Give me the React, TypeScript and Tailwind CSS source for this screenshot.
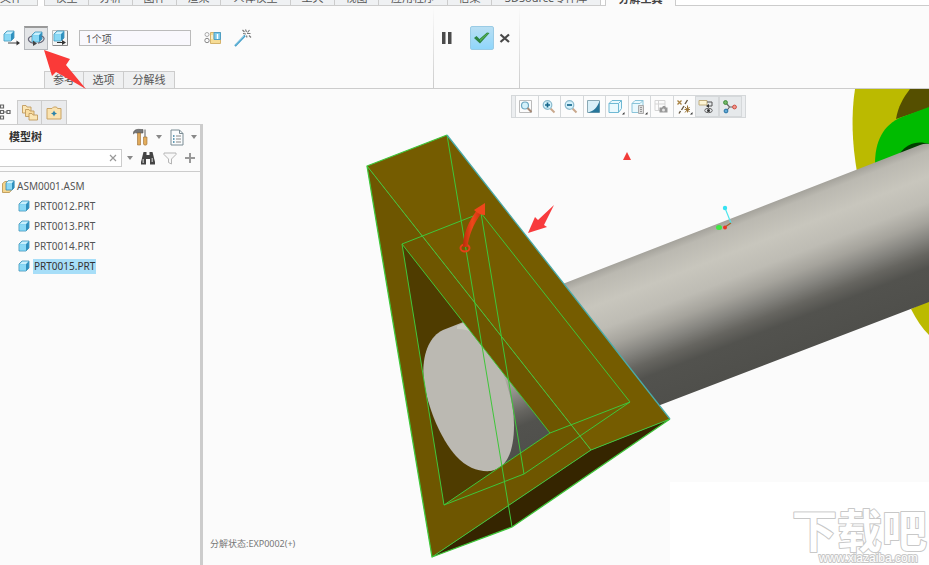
import React from "react";
import clsx from "clsx";

const tabs = [
  { name: "模型", width: "w-11" },
  { name: "分析", width: "w-11" },
  { name: "图样", width: "w-11" },
  { name: "渲染", width: "w-11" },
  { name: "人体模型", width: "w-[70px]" },
  { name: "工具", width: "w-11" },
  { name: "视图", width: "w-11" },
  { name: "应用程序", width: "w-[69px]" },
  { name: "信集", width: "w-11" },
  { name: "3DSource零件库", width: "w-[109px]" },
];

const parts = ["PRT0012.PRT", "PRT0013.PRT", "PRT0014.PRT", "PRT0015.PRT"];

/* ---------- icons ---------- */

const Cube = () => (
  <g strokeLinejoin="round">
    <path d="M1 4 4 1h7v7l-3 3H1z" fill="#4fb4dc" stroke="#3d8fb4" strokeWidth="0.8" />
    <path d="M1.5 4.2 4.2 1.5h6.4L8 4.2z" fill="#c9f0fd" />
    <path d="M1.4 4.2H8v6.4H1.4z" fill="#8ad8f5" />
    <path d="M8 4.2 10.7 1.5v6.4L8 10.6z" fill="#2f8fbd" />
  </g>
);

const PartIcon = () => (
  <svg viewBox="0 0 12 12" className="h-3 w-3 shrink-0">
    <Cube />
  </svg>
);

const AsmIcon = () => (
  <svg viewBox="0 0 13 13" className="h-[13px] w-[13px] shrink-0">
    <path d="M.5 3.5 3 1.5h7v8l-2.500 3h-7z" fill="#f5d58d" stroke="#b58f47" strokeWidth="0.8" />
    <path d="M4 3 6 .8h6.200v7L10 10H4z" fill="#8ad8f5" stroke="#3487ae" strokeWidth="0.8" />
    <path d="M10 3 12 1v7l-2 2z" fill="#2f8fbd" />
    <path d="M4.500 3 6.300 1.200h5L9.800 3z" fill="#d5f4fd" />
  </svg>
);

const TranslateIcon = () => (
  <svg viewBox="0 0 18 18" className="h-[18px] w-[18px]">
    <g transform="translate(0 1)">
      <Cube />
    </g>
    <path d="M5 14h9" stroke="#444" strokeWidth="1" />
    <path d="M13.500 11.500 17 14 13.500 16.500z" fill="#333" />
  </svg>
);

const RotateIcon = () => (
  <svg viewBox="0 0 18 18" className="h-[18px] w-[18px]" fill="none">
    <g transform="translate(4 1)">
      <Cube />
    </g>
    <path
      d="M5 6C1.500 7 .8 9 2 10.800c1 1.500 3 2.200 5 2.500M14.500 6c3 .8 3.200 3 1.500 4.800-1 1.300-3 2-5 2.400"
      stroke="#667"
      strokeWidth="1.200"
    />
    <path d="M6 10.500 10 13.500 6 16z" fill="#444" />
  </svg>
);

const ViewPlaneIcon = () => (
  <svg viewBox="0 0 16 16" className="h-4 w-4">
    <path d="M.5.5h15v15H.5z" fill="#f5f5f5" stroke="#bbb" />
    <path d="M15.500 1v14.500H1" fill="none" stroke="#888" />
    <g transform="translate(1 0)">
      <Cube />
    </g>
    <path d="M5 12.500h6" stroke="#333" />
    <path d="M10 10 14 12.500 10 15z" fill="#333" />
  </svg>
);

const CopyMotionIcon = () => (
  <svg viewBox="0 0 18 14" className="h-[14px] w-[18px]" fill="none">
    <circle cx="3" cy="3.500" r="2" stroke="#aaa" />
    <circle cx="3" cy="9.500" r="2.200" stroke="#888" />
    <path d="M6.500 1.500h10v11h-10z" fill="#f6dc95" stroke="#d4b36c" />
    <path d="M10 1.500h6.500v7H10z" fill="#7cc9ea" stroke="#4f9fc4" />
    <path d="M13.500 3v5" stroke="#fff" strokeWidth="1.500" />
    <path d="M8 4v4" stroke="#fff" />
  </svg>
);

const WandIcon = () => (
  <svg viewBox="0 0 18 18" className="h-[18px] w-[18px]" fill="none">
    <path d="M1 17 11 6.500" stroke="#3f9bc6" strokeWidth="2" />
    <path d="M1 16.500 10 7" stroke="#a9e1f6" strokeWidth="0.7" />
    <path
      d="m8.500 1 2 2M11.500.5l1 2.500M15.500 1l-2 2.500M9 4.500l3 .5M13 4.500h3.500M12.500 6.500l.5 2M15 6.500l2 2"
      stroke="#777"
      strokeWidth="1.100"
    />
  </svg>
);

const FoldersIcon = () => (
  <svg viewBox="0 0 18 17" className="h-[17px] w-[18px]" stroke="#c19a5c" strokeWidth="0.9" strokeLinejoin="round">
    <path d="M1.500 1.500h3.500l1 1.500h4v6h-8.500z" fill="#fbe6b5" />
    <path d="M4.500 5.500H8L9 7h4v5.500H4.500z" fill="#f9dda0" />
    <path d="M8 9.500h3l1 1.500h4.500v5H8z" fill="#fbe6b5" />
  </svg>
);

const FavoritesIcon = () => (
  <svg viewBox="0 0 16 14" className="h-[14px] w-4">
    <path d="M1 2.500h5L7.500 1h3l1 1.500H15v10.500H1z" fill="#fae3b0" stroke="#c9a364" />
    <path d="m8 4.500 1 2 2 1-2 1-1 2-1-2-2-1 2-1z" fill="#2b83ab" />
  </svg>
);

const TreeTabIcon = () => (
  <svg viewBox="0 0 12 18" className="h-[18px] w-3" fill="none" stroke="#666" strokeWidth="1.200">
    <path d="M.5 2h3v3h-3zM.5 7.500h3v3h-3zM.5 13h3v3h-3zM7 7.500h3v3H7zM3.500 9H7" />
  </svg>
);

const ToolsIcon = () => (
  <svg viewBox="0 0 15 18" className="h-[18px] w-[15px]">
    <path d="M.5 4C2 1.500 4 1 8 1.500h2v3.500H3.500C2 4.500 1.500 5 .5 6z" fill="#777" stroke="#555" strokeWidth="0.6" />
    <path d="M4.500 5h3v12h-3z" fill="#dfa95b" stroke="#9a6c30" strokeWidth="0.6" />
    <path d="M12 1.500V9" stroke="#888" strokeWidth="1.400" />
    <path d="M10.500 9H14v7c0 1.500-3.500 1.500-3.500 0z" fill="#e3ae5e" stroke="#9a6c30" strokeWidth="0.6" />
  </svg>
);

const SettingsListIcon = () => (
  <svg viewBox="0 0 14 17" className="h-[17px] w-[14px]" fill="none">
    <path d="M1 1h8.500L13 4.500V16H1z" fill="#fafcfd" stroke="#7b8c94" />
    <path d="M9.500 1v3.500H13" stroke="#7b8c94" />
    <path d="M3 7h1.500M3 10h1.500M3 13h1.500" stroke="#347d9f" strokeWidth="1.500" />
    <path d="M6 7h5M6 10h5M6 13h5" stroke="#888" />
  </svg>
);

const BinocularsIcon = () => (
  <svg viewBox="0 0 16 14" className="h-[14px] w-4" fill="#444">
    <path d="M3.500 1h3v3h3V1h3l1 4 1.500 6v2.500h-5V8H6v5.500H1V11l1.500-6z" />
    <path d="M2.500 8H4v4H2.500zM11.500 7H13v4h-1.500z" fill="#aaa" />
  </svg>
);

const FilterIcon = () => (
  <svg viewBox="0 0 14 13" className="h-[13px] w-[14px]">
    <path d="M1 1h12v1.500L8.500 7v5l-3-1.500V7L1 2.500z" fill="#f8f8f8" stroke="#b5b5b5" />
  </svg>
);

const Caret = () => (
  <svg viewBox="0 0 6 4" className="h-1 w-[6px]">
    <path d="M0 0h6L3 4z" fill="#888" />
  </svg>
);

const Glass = ({ children }: { children?: React.ReactNode }) => (
  <>
    <path d="m9.500 9.500 4 4" stroke="#c9a88c" strokeWidth="2" />
    <circle cx="6.500" cy="6" r="4.300" fill="#d3f1fb" stroke="#8bbacd" strokeWidth="1.200" />
    {children}
  </>
);

const viewTools = [
  {
    label: "重新调整",
    icon: (
      <>
        <path d="M1.500 1.500h12v12h-12z" stroke="#bbb" />
        <circle cx="7" cy="6.500" r="3.500" fill="#d3f1fb" stroke="#6da7c0" strokeWidth="1.200" />
        <path d="m9.500 9 4 4" stroke="#a78975" strokeWidth="2" />
      </>
    ),
  },
  { label: "放大", icon: <Glass><path d="M4 6h5M6.500 3.500v5" stroke="#17678c" strokeWidth="1.700" /></Glass> },
  { label: "缩小", icon: <Glass><path d="M4 6h5" stroke="#17678c" strokeWidth="1.700" /></Glass> },
  {
    label: "重画",
    icon: (
      <>
        <path d="M1.500 1.500h12v12h-12z" fill="#d9f0f9" stroke="#8aa9b5" />
        <path d="M13.500 2v11.500H2C8 12 11 9 13.500 2z" fill="#27769a" />
      </>
    ),
  },
  {
    label: "显示样式",
    icon: (
      <>
        <path d="M1 4.500 4 1.500h9.500v8l-3 4H1z" fill="#e9f9fe" stroke="#6fb9d4" />
        <path d="M1 4.500h9.500v9M10.500 4.500l3-3" stroke="#6fb9d4" />
        <path d="M14 15.500h2.500V13z" fill="#333" />
      </>
    ),
  },
  {
    label: "已保存方向",
    icon: (
      <>
        <path d="M1 4.500 4 1.500h8v9l-3 3H1z" fill="#e9f9fe" stroke="#8ac4d9" />
        <path d="M1 4.500h8M9 4.500l3-3" stroke="#8ac4d9" />
        <path d="M7.500 6.500h5v8h-5z" fill="#ddd" stroke="#aaa" />
        <path d="M9 8.500h2M9 10.500h2M9 12.500h2" stroke="#999" />
        <path d="M14 15.500h2.500V13z" fill="#333" />
      </>
    ),
  },
  {
    label: "视图管理器",
    icon: (
      <>
        <path d="M2 1.500h10v10H2zM2 5h10M5.500 1.500v10" stroke="#d5d5d5" />
        <path d="M6.500 8.500H9L10 7h2l1 1.500h1.500v5h-8z" fill="#999" />
        <circle cx="10.500" cy="11" r="1.500" fill="#e5e5e5" />
      </>
    ),
  },
  {
    label: "基准显示过滤器",
    icon: (
      <>
        <path d="m1.500 1.500 4 4M5.500 1.500l-4 4" stroke="#a88241" strokeWidth="1.300" />
        <path d="m11.500 1-2.500 4M8 7l-2.500 4M4.500 12 3 14.500" stroke="#665740" strokeWidth="1.400" />
        <path d="m9 8 4.500 5M13.500 8 9 13.500M11.500 6.500v7M8.500 10.500h5.500" stroke="#9a7435" />
        <path d="M14 15.500h2.500V13z" fill="#333" />
      </>
    ),
  },
  {
    label: "注释显示",
    pressed: true,
    icon: (
      <>
        <path d="M1 1.500h8v4.500H1z" fill="#fdf5d6" stroke="#c2ae7c" />
        <path d="M9 3h5v4h-4" stroke="#555" />
        <path d="m11 5-3 2 3 2z" fill="#333" />
        <ellipse cx="10.500" cy="11.500" rx="3.800" ry="2.200" stroke="#666" />
        <circle cx="10.500" cy="11.500" r="1.500" fill="#333" />
      </>
    ),
  },
  {
    label: "旋转中心",
    pressed: true,
    icon: (
      <>
        <path d="m4 4 3.500 4L13 8M7.500 8 4.500 12" stroke="#666" strokeWidth="1.200" />
        <circle cx="3.500" cy="3.500" r="1.900" fill="#77b96b" stroke="#3d8c38" />
        <circle cx="12.500" cy="8" r="1.900" fill="#f19a8f" stroke="#cc4e44" />
        <circle cx="4" cy="12" r="1.900" fill="#62a8d4" stroke="#2773a5" />
      </>
    ),
  },
];

/* ---------- top ---------- */

const MenuTabs = () => (
  <nav className="flex h-[6px] items-end overflow-hidden bg-white text-[11px] leading-[14px] text-[#555]">
    <button className="h-5 w-[38px] shrink-0 border-r border-b border-[#ccc] bg-[#f0f2f3] pt-[5px] text-left">
      文件
    </button>
    <div className="h-5 w-[6px] shrink-0" />
    {tabs.map((tab) => (
      <button
        key={tab.name}
        className={clsx("h-5 shrink-0 border-b border-l border-[#ccc] bg-[#eff1f3] pt-[5px] whitespace-nowrap", tab.width)}
      >
        {tab.name}
      </button>
    ))}
    <div className="h-5 w-[6px] shrink-0 border-x border-b border-[#ccc]" />
    <button className="h-5 w-[69px] shrink-0 bg-[#fbfbfb] pt-[5px] font-bold text-[#444]">分解工具</button>
    <div className="h-5 flex-1 border-b border-l border-[#ccc]" />
  </nav>
);

const Ribbon = () => (
  <header className="flex h-[83px] border-b border-[#ccc]">
    <div className="flex w-[433px] shrink-0 flex-col justify-between pt-5">
      <div className="flex h-6 items-center">
        <button aria-label="平移" className="flex w-6 justify-center">
          <TranslateIcon />
        </button>
        <button
          aria-label="旋转"
          aria-pressed="true"
          className="flex h-6 w-6 items-center justify-center border border-t-2 border-[#b5b8bc] border-t-[#999] bg-[#e3e5e7]"
        >
          <RotateIcon />
        </button>
        <button aria-label="视图平面" className="flex w-6 justify-center">
          <ViewPlaneIcon />
        </button>
        <input
          aria-label="要移动的元件"
          defaultValue="1个项"
          className="ml-[7px] h-4 w-28 border border-[#bbb] bg-[#f9f8fd] px-[6px] text-[10px] text-[#555] outline-none"
        />
        <button aria-label="复制位置" className="ml-[13px]">
          <CopyMotionIcon />
        </button>
        <button aria-label="创建修饰偏移线" className="ml-3">
          <WandIcon />
        </button>
      </div>
      <div className="flex pl-11 text-[11px] leading-4 text-[#555]">
        <button className="h-[17px] w-10 border-x border-t border-[#ccc] bg-[#eff0f1]">参考</button>
        <button className="h-[17px] w-10 border-t border-r border-[#ccc] bg-[#eff0f1]">选项</button>
        <button className="h-[17px] w-[51px] border-t border-r border-[#ccc] bg-[#eff0f1]">分解线</button>
      </div>
    </div>
    <div className="w-px bg-linear-to-b from-[#fbfbfb] to-[#ccc]" />
    <div className="flex w-[85px] shrink-0 items-start pt-5">
      <button aria-label="暂停" className="ml-[7px] flex h-6 w-4 items-center">
        <svg viewBox="0 0 12 12" className="h-3 w-3" fill="#4b4b4b">
          <path d="M1 0h3.500v12H1zM7 0h3.500v12H7z" />
        </svg>
      </button>
      <button
        aria-label="确定"
        className="ml-[13px] flex h-6 w-6 items-center justify-center rounded-xs border border-[#9acbe5] bg-linear-to-b from-[#b9dff3] to-[#8fd6fb]"
      >
        <svg viewBox="0 0 18 14" className="h-[14px] w-[18px]">
          <path d="m1 7 2.500-2 3 3L14 1.500l2.500.5L7 12.500z" fill="#2d8542" />
          <path d="m7 8.800 7-6.300 1.500-.2L7 10.500z" fill="#58b551" />
        </svg>
      </button>
      <button aria-label="取消" className="ml-[5px] flex h-6 w-3 items-center">
        <svg viewBox="0 0 12 10" className="h-[10px] w-3" fill="none" stroke="#484848" strokeWidth="2.200">
          <path d="m1.500 1.500 8.500 7.500M10 1.500 1.500 9" />
        </svg>
      </button>
    </div>
    <div className="w-px bg-linear-to-b from-[#fbfbfb] to-[#ccc]" />
  </header>
);

/* ---------- model tree ---------- */

const ModelTree = () => (
  <aside className="flex w-[203px] shrink-0 flex-col pt-[11px]">
    <div className="flex h-6">
      <button aria-label="模型树" className="flex w-[17px] items-center">
        <TreeTabIcon />
      </button>
      <button
        aria-label="文件夹浏览器"
        className="flex w-[25px] items-center justify-center border-x border-t border-[#ccc] bg-[#eaebed]"
      >
        <FoldersIcon />
      </button>
      <button
        aria-label="收藏夹"
        className="flex w-[25px] items-center justify-center border-t border-r border-[#ccc] bg-[#eaebed]"
      >
        <FavoritesIcon />
      </button>
    </div>
    <div className="flex flex-1 flex-col border-t border-r-3 border-[#ccc]">
      <div className="flex h-6 items-center pr-[3px] pl-[9px]">
        <h2 className="flex-1 text-[11px] font-bold text-[#333]">模型树</h2>
        <button aria-label="工具" className="flex items-center gap-2">
          <ToolsIcon />
          <Caret />
        </button>
        <button aria-label="设置" className="ml-2 flex items-center gap-[7px]">
          <SettingsListIcon />
          <Caret />
        </button>
      </div>
      <div className="flex h-[23px] items-start border-b border-[#ccc] pr-[5px]">
        <div className="flex h-[18px] flex-1 items-center border border-l-0 border-[#ccc] bg-white">
          <input aria-label="搜索模型树" className="h-4 w-full min-w-0 flex-1 px-2 text-[10px] outline-none" />
          <button aria-label="清除" className="flex w-4 justify-center">
            <svg viewBox="0 0 8 8" className="h-2 w-2" stroke="#999" strokeWidth="1.200">
              <path d="m1 1 6 6M7 1 1 7" />
            </svg>
          </button>
        </div>
        <div className="flex h-[18px] items-center">
          <button aria-label="搜索选项" className="ml-[5px]">
            <Caret />
          </button>
          <button aria-label="查找" className="ml-[7px]">
            <BinocularsIcon />
          </button>
          <button aria-label="过滤" className="ml-[7px]">
            <FilterIcon />
          </button>
          <button aria-label="添加" className="ml-2">
            <svg viewBox="0 0 10 10" className="h-[10px] w-[10px]" stroke="#999" strokeWidth="2">
              <path d="M5 0v10M0 5h10" />
            </svg>
          </button>
        </div>
      </div>
      <div className="pt-1 pl-[2px] text-[10px] leading-[15px] text-[#555]">
        <button className="flex h-5 items-center gap-[2px]">
          <AsmIcon />
          ASM0001.ASM
        </button>
        <ul className="pl-4">
          {parts.map((part) => (
            <li key={part}>
              <button className="flex h-5 items-center gap-[3px]">
                <PartIcon />
                <span className={clsx("px-px", part === "PRT0015.PRT" && "bg-[#a7def8] text-[#333]")}>{part}</span>
              </button>
            </li>
          ))}
        </ul>
      </div>
    </div>
  </aside>
);

/* ---------- graphics area ---------- */

const Scene = () => (
  <svg viewBox="203 89 726 476" preserveAspectRatio="xMinYMin slice" className="absolute inset-0 h-full w-full">
    <defs>
      <linearGradient id="shaft" gradientUnits="userSpaceOnUse" x1="700" y1="230" x2="754" y2="369">
        <stop offset="0" stopColor="#a3a19a" />
        <stop offset="0.06" stopColor="#bbb9b1" />
        <stop offset="0.22" stopColor="#c8c6bd" />
        <stop offset="0.38" stopColor="#bebcb4" />
        <stop offset="0.5" stopColor="#a5a39c" />
        <stop offset="0.6" stopColor="#868580" />
        <stop offset="0.7" stopColor="#666560" />
        <stop offset="0.79" stopColor="#52524e" />
        <stop offset="1" stopColor="#4f4f4b" />
      </linearGradient>
      <linearGradient id="handle" x1="0" y1="0" x2="1" y2="0">
        <stop offset="0" stopColor="#b92d0b" />
        <stop offset="0.5" stopColor="#f04819" />
        <stop offset="1" stopColor="#c73110" />
      </linearGradient>
      <clipPath id="opening">
        <path d="M402 244 550 433 444 505z" />
      </clipPath>
    </defs>

    <path d="M670 482h259v83H670z" fill="#fff" />

    {/* flange */}
    <path d="M855 89C851 115 852 143 857 172L929 150V89z" fill="#bbba00" />
    <path d="M911 309C916 319 922 328 929 335V300z" fill="#bbba00" />
    <path d="M910 89C903 98 898 107 896 119L929 108V89z" fill="#554f00" />
    <path d="M929 107 902 117C883 125 875 141 875 164L929 146z" fill="#00bb00" />
    <path d="M900 153C907 144 917 140 929 144V150z" fill="#003f00" />

    {/* shaft */}
    <path d="M560 285 920 145Q925 143 929 144V302L655 407z" fill="url(#shaft)" />

    {/* bracket */}
    <path d="M367 166 591 450 432 557z" fill="#6e5600" />
    <path d="M367 166 447 135 670 419 591 450z" fill="#755c00" />
    <path d="M432 557 591 450 670 419 512 527z" fill="#352500" />
    <g clipPath="url(#opening)">
      <path d="M402 244 550 433 444 505z" fill="#4f3c00" />
      <path d="M480 317 580 278V440L485 471z" fill="url(#shaft)" />
      <path
        d="M466 321 443 330C428 337 421 358 424 382C428 408 440 438 456 456C467 468 479 472 491 471C508 468 514 449 514 425C514 404 508 386 500 366L480 330z"
        fill="#bbb9b2"
      />
      <path d="M457 326 470 320 490 345C480 335 470 329 457 329z" fill="#cac9c1" />
    </g>
    <g fill="none" stroke="#3fc63a" strokeLinejoin="round">
      <path d="M447 135 367 166 432 557 512 527 670 419" strokeWidth="1.300" />
      <path d="M367 166 591 450M432 557 591 450 670 419M447 135 512 527" />
      <path d="M402 244 550 433 444 505zM481 213 630 402 524 474zM402 244 481 213M550 433 630 402M444 505 524 474" />
    </g>
    <path d="M447 135 670 419" stroke="#4aabaa" strokeWidth="1.300" />

    {/* drag handle */}
    <ellipse cx="465" cy="248" rx="4.500" ry="3.500" fill="none" stroke="#e84016" strokeWidth="2" />
    <path d="M463 247C463 235 468 222 477 210L481.500 213C473 224 469 236 467.500 247z" fill="url(#handle)" />
    <path d="M485 203 474 210Q479 215 485 215z" fill="#ef461b" />

    {/* spin center */}
    <path d="M725 208 731 223" stroke="#4fe5ec" strokeWidth="1.200" />
    <path d="M725 227 731 223" stroke="#a36325" strokeWidth="1.200" />
    <circle cx="725" cy="208" r="2.200" fill="#36e2f2" />
    <ellipse cx="719" cy="227.500" rx="3" ry="2.500" fill="#3eea42" />
    <circle cx="725" cy="227.500" r="2" fill="#ed3423" />

    <path d="M627 152 631 160H623z" fill="#f13b38" />
    <path d="M528 233 535 217 538 220 554 205 544 225 547 227z" fill="#f83b3d" />
  </svg>
);

const ViewToolbar = () => (
  <div className="absolute top-[6px] left-[308px] flex h-[23px] w-[235px] border border-[#d5d8da] bg-[#eceef0] px-[3px]">
    {viewTools.map((tool) => (
      <button
        key={tool.label}
        aria-label={tool.label}
        className={clsx(
          "flex flex-1 items-center justify-center border-l border-[#d5d8da]",
          tool.pressed ? "border border-[#b5b8bb] bg-[#e6e9eb]" : "bg-[#fcfcfc]"
        )}
      >
        <svg viewBox="0 0 17 16" className="h-4 w-[17px]" fill="none">
          {tool.icon}
        </svg>
      </button>
    ))}
  </div>
);

const Watermark = () => (
  <svg
    viewBox="0 0 137 60"
    className="absolute right-0 bottom-0 h-[60px] w-[137px]"
    fill="#fff"
    stroke="#c8c8c8"
    strokeWidth="2"
    paintOrder="stroke"
    strokeLinejoin="round"
  >
    <text x="0" y="43" fontSize="45" fontWeight="700" fontFamily="'Noto Sans CJK SC', sans-serif">
      下载吧
    </text>
    <text x="27" y="57" fontSize="12" fontFamily="'Liberation Sans', sans-serif">
      www.xiazaiba.com
    </text>
  </svg>
);

const App = () => {
  return (
    <div className="relative flex min-h-screen flex-col overflow-hidden bg-[#fbfbfb] font-['Noto_Sans','Noto_Sans_CJK_SC',sans-serif]">
      <MenuTabs />
      <Ribbon />
      <div className="flex flex-1">
        <ModelTree />
        <main className="relative flex-1 overflow-hidden">
          <Scene />
          <ViewToolbar />
          <p className="absolute bottom-[14px] left-[7px] text-[9px] leading-[14px] text-[#777]">
            分解状态:EXP0002(+)
          </p>
          <Watermark />
        </main>
      </div>
      {/* pointer to the rotate button */}
      <svg viewBox="0 0 44 42" className="pointer-events-none absolute top-[49px] left-[43px] h-[42px] w-11">
        <path d="M1 1 27 10 23 16 43 40 13 23 9 27z" fill="#fa3a38" />
      </svg>
    </div>
  );
};

export default App;
